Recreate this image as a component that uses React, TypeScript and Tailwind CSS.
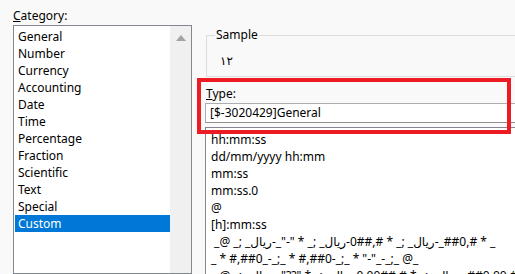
import React from 'react';

const categories = [
    'General', 'Number', 'Currency', 'Accounting', 'Date', 'Time',
    'Percentage', 'Fraction', 'Scientific', 'Text', 'Special', 'Custom',
];

const Riyal = () => <span dir="rtl">ريال</span>;

const typeRows: React.ReactNode[] = [
    'hh:mm:ss',
    'dd/mm/yyyy hh:mm',
    'mm:ss',
    'mm:ss.0',
    '@',
    '[h]:mm:ss',
    <>{'\u00a0_@ _; _'}<Riyal />{'-_"-" * _; _'}<Riyal />{'-0##,# * _; _'}<Riyal />{'-_##0,# * _'}</>,
    '_ * #,##0_-_;_ * #,##0-_;_ * "-"_-_;_ @_',
    <>{'\u00a0_@ _; _'}<Riyal />{'-_"??" * _; _'}<Riyal />{'-0.00##,# * _; _'}<Riyal />{'-_##0.00,# * _'}</>,
];

export default function App() {
    return (
        <div className="relative w-[515px] h-[274px] overflow-hidden bg-[#f9f9f9] text-black text-[12px] font-['Noto_Sans','DejaVu_Sans',sans-serif] flex">
            {/* category column */}
            <div className="w-[192px] shrink-0 pl-[13px] pt-[7px] flex flex-col">
                <div className="h-[19px] leading-[17px]">
                    <span className="underline">C</span>ategory:
                </div>
                <div className="w-[179px] h-[260px] border border-[#828790] bg-white flex">
                    <div className="flex-1 pl-[1px] pt-[2px]">
                        {categories.map(c => (
                            <div
                                key={c}
                                className={c === 'Custom'
                                    ? 'h-[17px] leading-[17px] pl-[3px] bg-[#0078d7] text-white'
                                    : 'h-[17px] leading-[17px] pl-[3px]'}
                            >
                                {c}
                            </div>
                        ))}
                    </div>
                    <div className="w-[21px] bg-[#f0f0f0] flex flex-col items-center pt-[9px]">
                        <svg width="10" height="6" viewBox="0 0 10 6">
                            <polygon points="0,6 5,0 10,6" fill="#a3a3a3" />
                        </svg>
                    </div>
                </div>
            </div>

            {/* right column */}
            <div className="ml-[13px] w-[330px] shrink-0 pt-[27px] flex flex-col">
                <fieldset className="ml-[1px] border border-[#dcdcdc] px-[8px]">
                    <legend className="px-[1px] leading-[16px]">Sample</legend>
                    <div className="h-[33px] pt-[10px] pl-[5px] leading-[17px] font-['DejaVu_Sans',sans-serif]">١٢</div>
                </fieldset>

                <div className="mt-[8px] h-[17px] leading-[17px] pl-[1px]">
                    <span className="underline">T</span>ype:
                </div>
                <div className="mt-[1px] h-[27px] border border-[#abadb3] border-b-[#8f8f8f] bg-white pl-[4px] flex items-center">
                    [$-3020429]General
                </div>
                <div className="mt-[4px] h-[160px] border-l border-t border-[#828790] bg-white pt-[3px] pl-[5px] whitespace-nowrap">
                    {typeRows.map((r, i) => (
                        <div key={i} className="h-[17px] leading-[17px]">{r}</div>
                    ))}
                </div>
            </div>

            {/* red highlight annotation */}
            <div className="absolute left-[197px] top-[78px] w-[314px] h-[56px] border-[4px] border-[#ed1c24]" />
        </div>
    );
}
